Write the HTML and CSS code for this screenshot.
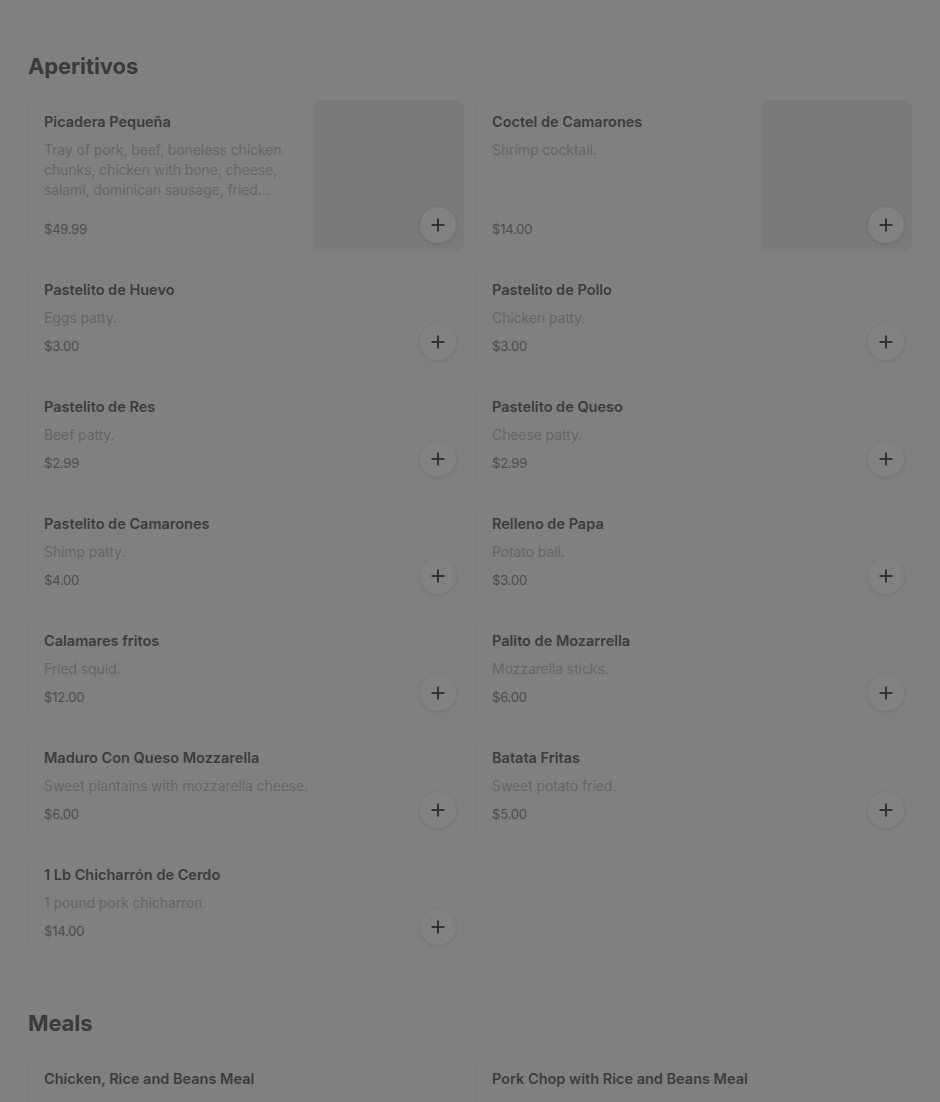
FILE: index.html
```html
<!DOCTYPE html>
<html lang="es">
<head>
<meta charset="utf-8">
<title>Menu</title>
<link rel="stylesheet" href="styles.css">
</head>
<body>
<main class="menu">
  <section class="section">
    <h2 class="section-title">Aperitivos</h2>
    <div class="grid">
      <div class="card has-img">
        <div class="info">
          <div class="name">Picadera Pequeña</div>
          <div class="desc clamp">Tray of pork, beef, boneless chicken chunks, chicken with bone, cheese, salami, dominican sausage, fried…</div>
          <div class="price">$49.99</div>
        </div>
        <div class="img"></div>
        <button class="add" aria-label="Add"><svg viewBox="0 0 16 16" width="16" height="16"><path d="M8 1.5v13M1.5 8h13" stroke="currentColor" stroke-width="2" fill="none"/></svg></button>
      </div>
      <div class="card has-img">
        <div class="info">
          <div class="name">Coctel de Camarones</div>
          <div class="desc">Shrimp cocktail.</div>
          <div class="price">$14.00</div>
        </div>
        <div class="img"></div>
        <button class="add" aria-label="Add"><svg viewBox="0 0 16 16" width="16" height="16"><path d="M8 1.5v13M1.5 8h13" stroke="currentColor" stroke-width="2" fill="none"/></svg></button>
      </div>
      <div class="card">
        <div class="info">
          <div class="name">Pastelito de Huevo</div>
          <div class="desc">Eggs patty.</div>
          <div class="price">$3.00</div>
        </div>
        <button class="add" aria-label="Add"><svg viewBox="0 0 16 16" width="16" height="16"><path d="M8 1.5v13M1.5 8h13" stroke="currentColor" stroke-width="2" fill="none"/></svg></button>
      </div>
      <div class="card">
        <div class="info">
          <div class="name">Pastelito de Pollo</div>
          <div class="desc">Chicken patty.</div>
          <div class="price">$3.00</div>
        </div>
        <button class="add" aria-label="Add"><svg viewBox="0 0 16 16" width="16" height="16"><path d="M8 1.5v13M1.5 8h13" stroke="currentColor" stroke-width="2" fill="none"/></svg></button>
      </div>
      <div class="card">
        <div class="info">
          <div class="name">Pastelito de Res</div>
          <div class="desc">Beef patty.</div>
          <div class="price">$2.99</div>
        </div>
        <button class="add" aria-label="Add"><svg viewBox="0 0 16 16" width="16" height="16"><path d="M8 1.5v13M1.5 8h13" stroke="currentColor" stroke-width="2" fill="none"/></svg></button>
      </div>
      <div class="card">
        <div class="info">
          <div class="name">Pastelito de Queso</div>
          <div class="desc">Cheese patty.</div>
          <div class="price">$2.99</div>
        </div>
        <button class="add" aria-label="Add"><svg viewBox="0 0 16 16" width="16" height="16"><path d="M8 1.5v13M1.5 8h13" stroke="currentColor" stroke-width="2" fill="none"/></svg></button>
      </div>
      <div class="card">
        <div class="info">
          <div class="name">Pastelito de Camarones</div>
          <div class="desc">Shimp patty.</div>
          <div class="price">$4.00</div>
        </div>
        <button class="add" aria-label="Add"><svg viewBox="0 0 16 16" width="16" height="16"><path d="M8 1.5v13M1.5 8h13" stroke="currentColor" stroke-width="2" fill="none"/></svg></button>
      </div>
      <div class="card">
        <div class="info">
          <div class="name">Relleno de Papa</div>
          <div class="desc">Potato ball.</div>
          <div class="price">$3.00</div>
        </div>
        <button class="add" aria-label="Add"><svg viewBox="0 0 16 16" width="16" height="16"><path d="M8 1.5v13M1.5 8h13" stroke="currentColor" stroke-width="2" fill="none"/></svg></button>
      </div>
      <div class="card">
        <div class="info">
          <div class="name">Calamares fritos</div>
          <div class="desc">Fried squid.</div>
          <div class="price">$12.00</div>
        </div>
        <button class="add" aria-label="Add"><svg viewBox="0 0 16 16" width="16" height="16"><path d="M8 1.5v13M1.5 8h13" stroke="currentColor" stroke-width="2" fill="none"/></svg></button>
      </div>
      <div class="card">
        <div class="info">
          <div class="name">Palito de Mozarrella</div>
          <div class="desc">Mozzarella sticks.</div>
          <div class="price">$6.00</div>
        </div>
        <button class="add" aria-label="Add"><svg viewBox="0 0 16 16" width="16" height="16"><path d="M8 1.5v13M1.5 8h13" stroke="currentColor" stroke-width="2" fill="none"/></svg></button>
      </div>
      <div class="card">
        <div class="info">
          <div class="name">Maduro Con Queso Mozzarella</div>
          <div class="desc">Sweet plantains with mozzarella cheese.</div>
          <div class="price">$6.00</div>
        </div>
        <button class="add" aria-label="Add"><svg viewBox="0 0 16 16" width="16" height="16"><path d="M8 1.5v13M1.5 8h13" stroke="currentColor" stroke-width="2" fill="none"/></svg></button>
      </div>
      <div class="card">
        <div class="info">
          <div class="name">Batata Fritas</div>
          <div class="desc">Sweet potato fried.</div>
          <div class="price">$5.00</div>
        </div>
        <button class="add" aria-label="Add"><svg viewBox="0 0 16 16" width="16" height="16"><path d="M8 1.5v13M1.5 8h13" stroke="currentColor" stroke-width="2" fill="none"/></svg></button>
      </div>
      <div class="card">
        <div class="info">
          <div class="name">1 Lb Chicharrón de Cerdo</div>
          <div class="desc">1 pound pork chicharron.</div>
          <div class="price">$14.00</div>
        </div>
        <button class="add" aria-label="Add"><svg viewBox="0 0 16 16" width="16" height="16"><path d="M8 1.5v13M1.5 8h13" stroke="currentColor" stroke-width="2" fill="none"/></svg></button>
      </div>
    </div>
  </section>
  <section class="section">
    <h2 class="section-title">Meals</h2>
    <div class="grid">
      <div class="card">
        <div class="info">
          <div class="name">Chicken, Rice and Beans Meal</div>
        </div>
      </div>
      <div class="card">
        <div class="info">
          <div class="name">Pork Chop with Rice and Beans Meal</div>
        </div>
      </div>
    </div>
  </section>
</main>
</body>
</html>
```

FILE: styles.css
```css
* { box-sizing: border-box; }
html, body { margin: 0; padding: 0; }
body {
  background: #808080;
  font-family: Inter, "Liberation Sans", sans-serif;
  color: #3c3c3c;
  -webkit-font-smoothing: antialiased;
}
.menu {
  width: 884px;
  margin-left: 28px;
  padding-top: 52px;
  padding-bottom: 40px;
}
.section + .section { margin-top: 56px; }
.section-title {
  margin: 0 0 20px;
  font-size: 22px;
  line-height: 28px;
  font-weight: 700;
  color: #3a3a3a;
  letter-spacing: -0.1px;
}
.grid {
  display: grid;
  grid-template-columns: 1fr 1fr;
  column-gap: 12px;
  row-gap: 17px;
}
.card {
  position: relative;
  display: flex;
  min-height: 100px;
  border-radius: 8px;
  box-shadow: inset 0 0 0 1px #7c7c7c;
}
.info {
  flex: 1;
  min-width: 0;
  display: flex;
  flex-direction: column;
  padding: 12px 16px;
}
.name {
  font-size: 14.5px;
  line-height: 20px;
  font-weight: 600;
  color: #3c3c3c;
  letter-spacing: 0;
}
.desc {
  margin-top: 8px;
  font-size: 14px;
  line-height: 20px;
  color: #656565;
  letter-spacing: -0.1px;
}
.clamp {
  max-height: 60px;
  overflow: hidden;
}
.price {
  margin-top: 8px;
  font-size: 13px;
  line-height: 20px;
  color: #4c4c4c;
  letter-spacing: -0.2px;
}
.has-img .price { margin-top: auto; }
.has-img { height: 151px; }
.img {
  width: 150px;
  height: 151px;
  flex: none;
  background: #7a7a7a;
  border-radius: 0 8px 8px 0;
}
.add {
  position: absolute;
  right: 8px;
  bottom: 8px;
  width: 36px;
  height: 36px;
  padding: 0;
  border: none;
  border-radius: 50%;
  background: #828282;
  color: #333;
  display: flex;
  align-items: center;
  justify-content: center;
  box-shadow: 0 1px 4px rgba(0, 0, 0, 0.12);
}
.add svg { display: block; }
```
